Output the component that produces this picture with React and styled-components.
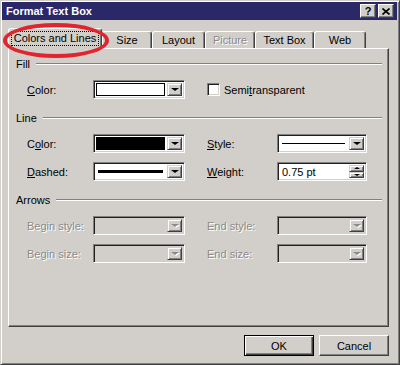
import React from 'react';
import styled, { createGlobalStyle } from 'styled-components';

const GlobalStyle = createGlobalStyle`
  html, body { margin: 0; padding: 0; background: #d2cfca; }
  body { font-family: "Liberation Sans", Arial, sans-serif; font-size: 11px; }
`

const FACE = '#d2cfca'

const Window = styled.div`
  position: relative;
  width: 400px;
  height: 365px;
  box-sizing: border-box;
  background: ${FACE};
  border: 1px solid;
  border-color: ${FACE} #404040 #404040 ${FACE};
  box-shadow: inset 1px 1px 0 #fff, inset -1px -1px 0 #808080;
  padding: 1px 2px 2px 1px;
  display: flex;
  flex-direction: column;
`
const TitleBar = styled.div`
  height: 18px;
  background: #2b2868;
  display: flex;
  align-items: center;
  padding: 0 3px 0 4px;
  color: #fff;
  font-weight: bold;
  font-size: 11px;
`
const TitleText = styled.div`
  flex: 1;
`
const TitleButton = styled.div`
  width: 16px;
  height: 14px;
  box-sizing: border-box;
  background: ${FACE};
  border: 1px solid;
  border-color: #fff #404040 #404040 #fff;
  box-shadow: inset -1px -1px 0 #808080;
  margin-left: ${p => p.$gap || 0}px;
  color: #000;
  display: flex;
  align-items: center;
  justify-content: center;
  font-size: 11px;
  font-weight: bold;
  line-height: 1;
`
const Body = styled.div`
  flex: 1;
  display: flex;
  flex-direction: column;
  padding: 8px 8px 0 6px;
`
const TabStrip = styled.div`
  display: flex;
  align-items: flex-end;
  height: 20px;
  position: relative;
  z-index: 1;
`
const Tab = styled.div`
  width: ${p => p.$w}px;
  height: ${p => p.$active ? 21 : 17}px;
  box-sizing: border-box;
  background: ${FACE};
  border-top: 1px solid #fff;
  border-left: 1px solid #fff;
  border-right: 1px solid #404040;
  box-shadow: inset -1px 0 0 #808080;
  border-radius: 3px 3px 0 0;
  margin-bottom: ${p => p.$active ? -1 : 0}px;
  display: flex;
  align-items: ${p => p.$active ? 'flex-start' : 'center'};
  justify-content: center;
  padding-top: ${p => p.$active ? 3 : 0}px;
  color: ${p => p.$disabled ? '#8a8a8a' : '#000'};
  text-shadow: ${p => p.$disabled ? '1px 1px 0 #fff' : 'none'};
`
const FocusLabel = styled.span`
  outline: 1px dotted #000;
  padding: 0 2px;
  line-height: 13px;
`
const Panel = styled.div`
  height: 279px;
  box-sizing: border-box;
  border: 1px solid;
  border-color: #fff #404040 #404040 #fff;
  box-shadow: inset -1px -1px 0 #808080;
  padding: 8px 6px 0 7px;
  display: flex;
  flex-direction: column;
  gap: 12px;
`
const Group = styled.div`
  display: flex;
  flex-direction: column;
  gap: 9px;
`
const GroupHeader = styled.div`
  height: 14px;
  display: flex;
  align-items: center;
  color: #000;
`
const Rule = styled.div`
  flex: 1;
  height: 0;
  border-top: 1px solid #808080;
  border-bottom: 1px solid #fff;
  margin-left: 6px;
`
const Row = styled.div`
  display: grid;
  grid-template-columns: 66px 92px 22px 70px 90px;
  align-items: center;
  height: 19px;
  padding-left: 11px;
`
const Label = styled.div`
  color: ${p => p.$disabled ? '#8a8a8a' : '#000'};
  text-shadow: ${p => p.$disabled ? '1px 1px 0 #fff' : 'none'};
  grid-column: ${p => p.$col || 'auto'};
`
const Combo = styled.div`
  height: 19px;
  box-sizing: border-box;
  border: 1px solid;
  border-color: #808080 #fff #fff #808080;
  box-shadow: inset 1px 1px 0 #202020, inset -1px -1px 0 ${FACE};
  background: ${p => p.$disabled ? FACE : '#fff'};
  padding: 2px;
  display: flex;
  gap: 2px;
  grid-column: ${p => p.$col || 'auto'};
`
const Swatch = styled.div`
  flex: 1;
  box-sizing: border-box;
  background: ${p => p.$color || '#fff'};
  border: 1px solid #000;
  display: flex;
  align-items: center;
  padding: 0 2px;
`
const Stroke = styled.div`
  flex: 1;
  height: ${p => p.$h}px;
  background: #000;
`
const Field = styled.div`
  flex: 1;
  display: flex;
  align-items: center;
  padding-left: 2px;
  color: #000;
`
const DropButton = styled.div`
  width: 15px;
  box-sizing: border-box;
  background: ${FACE};
  border: 1px solid;
  border-color: ${FACE} #404040 #404040 ${FACE};
  box-shadow: inset 1px 1px 0 #fff, inset -1px -1px 0 #808080;
  display: flex;
  align-items: center;
  justify-content: center;
`
const Arrow = styled.div`
  width: 0;
  height: 0;
  border-left: ${p => p.$size || 4}px solid transparent;
  border-right: ${p => p.$size || 4}px solid transparent;
  ${p => p.$up ? 'border-bottom' : 'border-top'}: ${p => (p.$size || 4) - 1}px solid ${p => p.$disabled ? '#8a8a8a' : '#000'};
  filter: ${p => p.$disabled ? 'drop-shadow(1px 1px 0 #fff)' : 'none'};
`
const SpinBox = styled.div`
  width: 15px;
  display: flex;
  flex-direction: column;
`
const SpinHalf = styled(DropButton)`
  width: 15px;
  flex: 1;
`
const CheckWrap = styled.label`
  grid-column: 4 / 6;
  display: flex;
  align-items: center;
  gap: 4px;
`
const CheckBox = styled.div`
  width: 13px;
  height: 13px;
  box-sizing: border-box;
  background: #fff;
  border: 1px solid;
  border-color: #808080 #fff #fff #808080;
  box-shadow: inset 1px 1px 0 #202020, inset -1px -1px 0 ${FACE};
`
const ButtonRow = styled.div`
  display: flex;
  justify-content: flex-end;
  gap: 5px;
  margin-top: 8px;
`
const Button = styled.div`
  width: 70px;
  height: 21px;
  box-sizing: border-box;
  background: ${FACE};
  border: 1px solid;
  border-color: ${p => p.$default ? '#000' : `#fff #404040 #404040 #fff`};
  box-shadow: ${p => p.$default
    ? 'inset 1px 1px 0 #fff, inset -1px -1px 0 #404040, inset -2px -2px 0 #808080'
    : 'inset -1px -1px 0 #808080'};
  display: flex;
  align-items: center;
  justify-content: center;
  color: #000;
`
const Annotation = styled.div`
  position: absolute;
  left: 2px;
  top: 22px;
  width: 106px;
  height: 35px;
  box-sizing: border-box;
  border: 4px solid #e1242e;
  border-radius: 50%;
  z-index: 5;
  pointer-events: none;
`

const Drop = ({ disabled }) => (
  <DropButton><Arrow $disabled={disabled} /></DropButton>
)

const tabs = [
  { label: 'Colors and Lines', w: 94, active: true },
  { label: 'Size', w: 50 },
  { label: 'Layout', w: 53 },
  { label: 'Picture', w: 50, disabled: true },
  { label: 'Text Box', w: 59 },
  { label: 'Web', w: 52 },
]

export default function App() {
  return (
    <>
      <GlobalStyle />
      <Window>
        <TitleBar>
          <TitleText>Format Text Box</TitleText>
          <TitleButton>?</TitleButton>
          <TitleButton $gap={2}>
            <svg width="8" height="7" viewBox="0 0 8 7">
              <path d="M0.5 0.5 L7.5 6.5 M7.5 0.5 L0.5 6.5" stroke="#000" strokeWidth="1.6" />
            </svg>
          </TitleButton>
        </TitleBar>
        <Body>
          <TabStrip>
            {tabs.map(t => (
              <Tab key={t.label} $w={t.w} $active={t.active} $disabled={t.disabled}>
                {t.active ? <FocusLabel>{t.label}</FocusLabel> : t.label}
              </Tab>
            ))}
          </TabStrip>
          <Panel>
            <Group>
              <GroupHeader>Fill<Rule /></GroupHeader>
              <Row>
                <Label><u>C</u>olor:</Label>
                <Combo>
                  <Swatch $color="#fff" />
                  <Drop />
                </Combo>
                <CheckWrap>
                  <CheckBox />
                  <span>Semi<u>t</u>ransparent</span>
                </CheckWrap>
              </Row>
            </Group>
            <Group>
              <GroupHeader>Line<Rule /></GroupHeader>
              <Row>
                <Label>C<u>o</u>lor:</Label>
                <Combo>
                  <Swatch $color="#000" />
                  <Drop />
                </Combo>
                <Label $col={4}><u>S</u>tyle:</Label>
                <Combo>
                  <Swatch $color="#fff" style={{ border: 'none' }}><Stroke $h={1} /></Swatch>
                  <Drop />
                </Combo>
              </Row>
              <Row>
                <Label><u>D</u>ashed:</Label>
                <Combo>
                  <Swatch $color="#fff" style={{ border: 'none' }}><Stroke $h={3} /></Swatch>
                  <Drop />
                </Combo>
                <Label $col={4}><u>W</u>eight:</Label>
                <Combo>
                  <Field>0.75 pt</Field>
                  <SpinBox>
                    <SpinHalf><Arrow $up $size={3} /></SpinHalf>
                    <SpinHalf><Arrow $size={3} /></SpinHalf>
                  </SpinBox>
                </Combo>
              </Row>
            </Group>
            <Group>
              <GroupHeader>Arrows<Rule /></GroupHeader>
              <Row>
                <Label $disabled>Begin style:</Label>
                <Combo $disabled>
                  <Field />
                  <Drop disabled />
                </Combo>
                <Label $col={4} $disabled>End style:</Label>
                <Combo $disabled>
                  <Field />
                  <Drop disabled />
                </Combo>
              </Row>
              <Row>
                <Label $disabled>Begin size:</Label>
                <Combo $disabled>
                  <Field />
                  <Drop disabled />
                </Combo>
                <Label $col={4} $disabled>End size:</Label>
                <Combo $disabled>
                  <Field />
                  <Drop disabled />
                </Combo>
              </Row>
            </Group>
          </Panel>
          <ButtonRow>
            <Button $default>OK</Button>
            <Button>Cancel</Button>
          </ButtonRow>
        </Body>
        <Annotation />
      </Window>
    </>
  );
}
